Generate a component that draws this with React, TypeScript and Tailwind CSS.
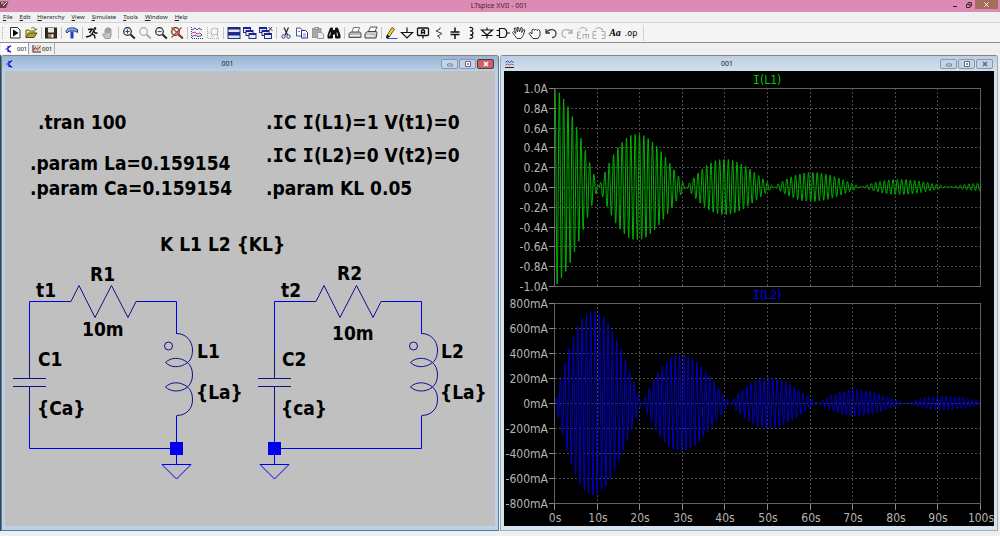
import type { ReactNode } from 'react';

const UI_FONT = "font-['Noto_Sans','Open_Sans',sans-serif]";

// ---------------------------------------------------------------- toolbar

function Icon({ children }: { children: ReactNode }) {
  return (
    <svg viewBox="0 0 16 16" className="h-4 w-4" fill="none" stroke="#111" strokeWidth="1">
      {children}
    </svg>
  );
}

type Tool = { label: string; art: ReactNode };

const magnifier = (stroke: string, inner: ReactNode) => (
  <>
    <circle cx="6.5" cy="6.5" r="3.8" stroke={stroke} strokeWidth="1.2" />
    <path d="M9.5 9.5l4.3 4" stroke={stroke} strokeWidth="2" />
    {inner}
  </>
);

const miniWindow = (x: number, y: number) => (
  <>
    <rect x={x} y={y} width="7" height="5" fill="#e8ecff" stroke="#24307f" />
    <path d={`M${x} ${y + 0.5}h7`} stroke="#1a2490" strokeWidth="2" />
  </>
);

const toolGroups: Tool[][] = [
  [
    {
      label: 'New Schematic',
      art: (
        <>
          <path d="M3.5 2.5h7l2.5 2.500v8h-9.500z" fill="#fff" stroke="#333" />
          <path d="M6 4.500v7l5.500-3.500z" fill="#000" stroke="none" />
        </>
      ),
    },
    {
      label: 'Open',
      art: (
        <>
          <path d="M3 12.500V5h3l1 1h4v2" fill="#e8e070" stroke="#66661a" />
          <path d="M3 12.500l2.500-4.500h8.500l-3 4.500z" fill="#a8a436" stroke="#4d4d10" />
          <path d="M8 3.500c2-1.500 4-1 4.500 1.500M11 4.500l1.500 1 1.500-2" stroke="#3c7a2a" />
        </>
      ),
    },
  ],
  [
    {
      label: 'Save',
      art: (
        <>
          <rect x="2.500" y="3" width="11" height="10" fill="#3a2a1c" stroke="#222" />
          <rect x="5" y="3" width="6" height="4.500" fill="#ece8e0" stroke="none" />
          <rect x="5" y="9" width="6" height="3.500" fill="#8d8478" stroke="none" />
          <rect x="8.500" y="9.500" width="1.500" height="3" fill="#fff" stroke="none" />
        </>
      ),
    },
  ],
  [
    {
      label: 'Control Panel',
      art: (
        <>
          <path d="M2 6.500C2.500 3.500 6 2.500 10 3l3.500 1.500v3L11 6H5L3 8z" fill="#8fb4dc" stroke="#1a3380" />
          <path d="M8 6.500v7" stroke="#1740c8" strokeWidth="3" />
        </>
      ),
    },
  ],
  [
    {
      label: 'Run',
      art: (
        <>
          <circle cx="11" cy="3.500" r="1.300" fill="#111" stroke="none" />
          <path d="M4 4.500l4-0.500 2 1.500L8 9l2.500 1.500 0.500 3M9.500 5.500l1.500 2.500h2.500M8 9l-2 2-4 1M7.500 5L5.500 8" strokeWidth="1.400" />
        </>
      ),
    },
    {
      label: 'Halt',
      art: (
        <path
          d="M5 13.500L2.500 9.500l1-0.800L5 10V4.500h1.500V8 3h1.500v5V3h1.500v5V4H11v6.500l-1 3z"
          fill="#c4c4c4"
          stroke="#999"
        />
      ),
    },
  ],
  [
    { label: 'Zoom In', art: magnifier('#222', <path d="M4.500 6.500h4M6.500 4.500v4" stroke="#2438a0" strokeWidth="1.200" />) },
    { label: 'Pan', art: magnifier('#a8a8a8', null) },
    { label: 'Zoom Out', art: magnifier('#222', <path d="M4.500 6.500h4" stroke="#1a7a7a" strokeWidth="1.200" />) },
    {
      label: 'Zoom Full Extents',
      art: magnifier('#4a2a1c', <path d="M2.500 2.500l11 10M12.500 2.500l-10 10" stroke="#b5402a" strokeWidth="1.200" />),
    },
  ],
  [
    {
      label: 'Autorange Y-axis',
      art: (
        <>
          <path d="M2.500 2v11.500H14" stroke="#444" strokeDasharray="1 1" />
          <path d="M3 5l3-2 2 2 2-2 3 2" stroke="#3450b8" />
          <path d="M3 8l3-1 2 2 3-1 2 2" stroke="#d0405c" />
          <path d="M3 11.500l3-1.500 3 1.500 4-1" stroke="#3450b8" />
        </>
      ),
    },
    {
      label: 'Plot Settings',
      art: (
        <>
          <path d="M2.500 2v11.500H14M2.500 8H6" stroke="#aaa" strokeDasharray="1 1" />
          <circle cx="9.500" cy="6.500" r="3.500" stroke="#bbb" />
          <path d="M7 12.500V9M12.500 3v9.500" stroke="#bbb" />
        </>
      ),
    },
  ],
  [
    {
      label: 'Tile Windows',
      art: (
        <>
          <rect x="2" y="2.500" width="12" height="5" fill="#dfe4f8" stroke="#24307f" />
          <rect x="2" y="8.500" width="12" height="5" fill="#dfe4f8" stroke="#24307f" />
          <path d="M2 3.500h12M2 9.500h12" stroke="#1a2490" strokeWidth="2" />
        </>
      ),
    },
    { label: 'Cascade Windows', art: <>{miniWindow(1.5, 2.5)}{miniWindow(4, 5.5)}{miniWindow(7, 8.5)}</> },
    {
      label: 'Close All',
      art: (
        <>
          {miniWindow(1.5, 2.5)}
          {miniWindow(4, 5.5)}
          {miniWindow(6.5, 8.5)}
          <path d="M10.500 2l4 4M14 2l-3.500 4" stroke="#333" />
        </>
      ),
    },
  ],
  [
    {
      label: 'Cut',
      art: (
        <>
          <path d="M6 2.500l3.500 7.500M10.500 2.500L7 10" stroke="#222" strokeWidth="1.200" />
          <circle cx="5.500" cy="11.500" r="1.700" stroke="#26358f" />
          <circle cx="10.500" cy="11.500" r="1.700" stroke="#26358f" />
        </>
      ),
    },
    {
      label: 'Copy',
      art: (
        <>
          <path d="M2.500 3h4l2 2v6h-6z" fill="#fff" stroke="#4a5590" />
          <path d="M7.500 5.500h4l2 2v5.500h-6z" fill="#fff" stroke="#26358f" />
          <path d="M4 6.500h2M9 9h3M9 11h3" stroke="#7780b0" />
        </>
      ),
    },
    {
      label: 'Paste',
      art: (
        <>
          <rect x="2.500" y="3.500" width="8.500" height="9" fill="#aaa" stroke="#999" />
          <rect x="5" y="2.500" width="3.500" height="2" fill="#ddd" stroke="#888" />
          <path d="M7.500 7.500h4l2 2v4h-6z" fill="#eee" stroke="#999" />
        </>
      ),
    },
    {
      label: 'Find',
      art: (
        <>
          <path
            d="M4.500 3h2v2.500h3V3h2l2.500 7v3H9.500V9h-3v4H2v-3z"
            fill="#111"
            stroke="#111"
            strokeLinejoin="round"
          />
          <path d="M4.500 7.500L3.500 11M11 7.500l0.500 3.500" stroke="#ddd" />
        </>
      ),
    },
  ],
  [
    {
      label: 'Print',
      art: (
        <>
          <path d="M5 7l1.500-4.500h6L11 7" fill="#fff" stroke="#777" />
          <path d="M2 8.500L4 7h9l1 1.500v4H2z" fill="#b8b8b8" stroke="#555" />
          <path d="M3 10.500h10" stroke="#eee" />
        </>
      ),
    },
    {
      label: 'Print Setup',
      art: (
        <>
          <path d="M5.500 6.500l2-4.500H14l-2 4.500" fill="#fff" stroke="#555" />
          <path d="M2 8.500L4.500 6.500h9l0.500 2-1 4.500H2z" fill="#c8c8c8" stroke="#444" />
          <path d="M3 11h8" stroke="#fff" />
          <path d="M8 9.500h3" stroke="#c8b428" />
        </>
      ),
    },
  ],
  [
    {
      label: 'Wire',
      art: (
        <>
          <path d="M4 10.500L9 2.500l2.500 1.500-5 7.500z" fill="#f0dc3c" stroke="#665510" />
          <path d="M4 10.500l-0.500 2.500 3-1.500z" fill="#111" stroke="#111" />
          <path d="M4 13.500h10.500" stroke="#3a48e0" />
        </>
      ),
    },
    { label: 'Ground', art: <path d="M8 2.500v4.500M2.500 7.500h11L8 13z" strokeWidth="1.200" /> },
    {
      label: 'Label Net',
      art: (
        <>
          <rect x="2.500" y="3" width="11" height="7.500" rx="1" strokeWidth="1.300" />
          <path d="M6.500 9V5.500q1.500-1.500 3 0V9M6.500 7.500h3M8 10.500v3" strokeWidth="1.300" />
        </>
      ),
    },
    { label: 'Resistor', art: <path d="M9 2.500v1.500L5 6l6 2.500-4.500 2.500L8.500 12v1.500" stroke="#444" strokeWidth="1" /> },
    { label: 'Capacitor', art: <path d="M8 2.500V7M8 9.500V14M3.500 7h9M3.500 9.500h9" strokeWidth="1.500" /> },
    { label: 'Inductor', art: <path d="M6.500 2.500c4-0.500 4.500 3.500 0.500 3.500 4 0 4 4 0 4 4 0 3.500 4-0.500 3.500" strokeWidth="1.200" /> },
    { label: 'Diode', art: <path d="M2.500 5h11L8 10zM8 2.500V5M2.500 10.500h11M8 10v3.500" strokeWidth="1.200" /> },
    { label: 'Component', art: <path d="M4.500 3.500h3.500c5 0 5 9 0 9H4.500zM1.500 5.500h3M1.500 10.500h3M12 8h3" strokeWidth="1.200" /> },
    {
      label: 'Move',
      art: (
        <path
          d="M6 13.500L1.500 7.500l1-1L5 8.500 3 3.500l1.300-0.700L6.500 7 6 2.500h1.500L8.500 7l1.500-4.500 1.300 0.500-0.500 4.500 2-3 1.200 0.700-2 5.300L10 13.500z"
          fill="#fff"
          stroke="#333"
        />
      ),
    },
    {
      label: 'Drag',
      art: (
        <path
          d="M6 13.500L2 8.500l1-1.200L5 9V5l1.500-1L7.500 5.500 8.500 4 10 5.500 11.500 4.500 13 6v4l-2 3.500z"
          fill="#fff"
          stroke="#333"
        />
      ),
    },
    { label: 'Undo', art: <path d="M3 4v4h4M3.500 7.500C6 3 13 4 13 8.500c0 2.500-2 4-4 4" stroke="#4a3a30" strokeWidth="1.300" /> },
    { label: 'Redo', art: <path d="M13 4v4H9M12.500 7.500C10 3 3 4 3 8.500c0 2.500 2 4 4 4" stroke="#b0b0b0" strokeWidth="1.300" /> },
    {
      label: 'Rotate',
      art: <path d="M6 7H2.500v6.500H6M2.500 10H5M8 13.500V9.500h5.500v4M11 9.500v4M4 4.500c2-2.500 6-2.500 8 0V6M12 6l-2-1" stroke="#aaa" />,
    },
    {
      label: 'Mirror',
      art: <path d="M5.500 6.500H2v7h3.500M2 10h3M10.500 6.500H14v7h-3.500M14 10h-3M4 4.500c2-2.500 6-2.500 8 0M12 5l-2-1" stroke="#aaa" />,
    },
  ],
];

const textTools = [
  { label: 'Text', text: 'Aa', style: "font-['Liberation_Serif',serif] text-[10px] font-bold italic" },
  {
    label: 'SPICE Directive',
    text: '.op',
    style: "font-['DejaVu_Sans_Condensed','DejaVu_Sans',sans-serif] text-[9px]",
  },
];

function Toolbar() {
  return (
    <div className="flex h-5 items-center border-b border-[#8e8e8e] bg-[#f5f5f5] pl-[2px]">
      <div className="mr-[4px] h-3 border-l border-dotted border-[#b0b0b0]" />
      {toolGroups.map((group, i) => (
        <div key={i} className="group flex items-center">
          {i > 0 && (
            <div className="flex h-3 w-[5px] justify-center group-even:w-[5px] group-odd:w-[4px]">
              <span className="w-px bg-[#c4c4c4]" />
            </div>
          )}
          {group.map((tool) => (
            <button key={tool.label} type="button" aria-label={tool.label} className="h-4 w-4">
              <Icon>{tool.art}</Icon>
            </button>
          ))}
        </div>
      ))}
      {textTools.map((tool) => (
        <button
          key={tool.label}
          type="button"
          aria-label={tool.label}
          className={`w-4 text-center leading-4 text-black ${tool.style}`}
        >
          {tool.text}
        </button>
      ))}
      <span className="ml-1 h-4 w-px bg-[#d4d4d4]" />
    </div>
  );
}

// ---------------------------------------------------------------- drawing text

const DRAWING_FONT = "font-['DejaVu_Sans_Condensed','DejaVu_Sans',sans-serif]";

// Capital I gets its slab form from the mono face so it can't be read as l or 1.
function Spelled({ text }: { text: string }) {
  return text.split(/(I)/).map((part, i) =>
    part === 'I' ? (
      <tspan key={i} className="font-['DejaVu_Sans_Mono',monospace]">
        I
      </tspan>
    ) : (
      part
    ),
  );
}

// ---------------------------------------------------------------- schematic

const schematicText: [number, number, string][] = [
  [33, 58, '.tran 100'],
  [25, 99, '.param La=0.159154'],
  [25, 124, '.param Ca=0.159154'],
  [261, 58, '.IC I(L1)=1 V(t1)=0'],
  [261, 91, '.IC I(L2)=0 V(t2)=0'],
  [261, 124, '.param KL 0.05'],
  [155, 180, 'K L1 L2 {KL}'],
  [85, 210, 'R1'],
  [77, 265, '10m'],
  [31, 226, 't1'],
  [33, 295, 'C1'],
  [32, 344, '{Ca}'],
  [192, 287, 'L1'],
  [191, 328, '{La}'],
  [332, 209, 'R2'],
  [327, 269, '10m'],
  [276, 226, 't2'],
  [277, 295, 'C2'],
  [276, 344, '{ca}'],
  [436, 287, 'L2'],
  [435, 328, '{La}'],
];

function TankCircuit({ x, groundX }: { x: number; groundX: number }) {
  return (
    <g transform={`translate(${x} 0)`} fill="none" strokeWidth="1">
      <g stroke="#0000f0">
        <path d="M24.500 279V230.500H58M138 230.500h33.500V263M171.500 345v32.500h-147V345" />
        <path d={`M${groundX} 377v16.500M${groundX - 14.5} 393.500h29l-14.500 14.500z`} />
        <rect x={groundX - 6.5} y="371" width="13" height="13" fill="#0000f0" stroke="none" />
      </g>
      <g stroke="#10108a">
        <path d="M58 230.500h8l8-16 16 32 16.500-32 16.500 32 8-16h7" />
        <path d="M24.500 279v28.500M8 307.500h33M8 315.500h33M24.500 315.500V345" />
        <circle cx="163.500" cy="275" r="4" />
        <path d="M171.500 262.500C181 262.500 187.500 270 187.500 279C187.500 286 185 290 182 292C175 297 166 297 160.500 291.500C166 286 175 286 182 291C185.500 294 187.500 298 187.500 304C187.500 310 185 314 182 316.500C175 321.500 166 321 160.500 316C166 310.500 175 310.500 182 315.500C186 319 187.500 323 187.500 329C187.500 338 181 344.500 171.500 344.500" />
      </g>
    </g>
  );
}

function Schematic() {
  return (
    <svg viewBox="0 0 490 455" className="block h-auto w-full bg-[#c0c0c0]">
      <TankCircuit x={0} groundX={171.5} />
      <TankCircuit x={245} groundX={24.5} />
      <g className={`text-[19px] font-bold ${DRAWING_FONT}`} fill="#000">
        {schematicText.map(([x, y, text]) => (
          <text key={`${x}-${y}`} x={x} y={y}>
            <Spelled text={text} />
          </text>
        ))}
      </g>
    </svg>
  );
}

// ---------------------------------------------------------------- waveforms

const PLOT_LEFT = 51;
const PLOT_RIGHT = 477;
const CARRIER = 0.983;
const BEAT = 0.02433;
const DECAY = 0.0314;

type Pane = {
  title: string;
  color: string;
  trace: string;
  top: number;
  bottom: number;
  peak: number;
  labels: string[];
  wave: (t: number) => number;
};

const turn = 2 * Math.PI;

const panes: Pane[] = [
  {
    title: 'I(L1)',
    color: '#00c800',
    trace: '#00b400',
    top: 17,
    bottom: 215,
    peak: 1,
    labels: ['1.0A', '0.8A', '0.6A', '0.4A', '0.2A', '0.0A', '-0.2A', '-0.4A', '-0.6A', '-0.8A', '-1.0A'],
    wave: (t) => Math.exp(-DECAY * t) * Math.cos(turn * BEAT * t) * Math.cos(turn * CARRIER * t),
  },
  {
    title: 'I(L2)',
    color: '#0000f0',
    trace: '#0000c8',
    top: 232,
    bottom: 432,
    peak: 0.8,
    labels: ['800mA', '600mA', '400mA', '200mA', '0mA', '-200mA', '-400mA', '-600mA', '-800mA'],
    wave: (t) => Math.exp(-DECAY * t) * Math.sin(turn * BEAT * t) * Math.sin(turn * CARRIER * t),
  },
];

const timeX = (t: number) => PLOT_LEFT + (t / 100) * (PLOT_RIGHT - PLOT_LEFT);

function tracePoints({ top, bottom, peak, wave }: Pane) {
  const mid = (top + bottom) / 2;
  const points: string[] = [];
  for (let i = 0; i <= 2000; i++) {
    const t = i / 20;
    points.push(`${timeX(t).toFixed(2)},${(mid - (wave(t) / peak) * (mid - top)).toFixed(2)}`);
  }
  return points.join(' ');
}

function PlotPane({ pane }: { pane: Pane }) {
  const { top, bottom, labels } = pane;
  const rowY = (i: number) => Math.round(top + (i * (bottom - top)) / (labels.length - 1)) + 0.5;
  return (
    <g>
      <g stroke="#4c4c48" strokeDasharray="2 2">
        {labels.slice(1, -1).map((label, i) => (
          <path key={label} d={`M${PLOT_LEFT} ${rowY(i + 1)}H${PLOT_RIGHT}`} />
        ))}
        {[10, 20, 30, 40, 50, 60, 70, 80, 90].map((t) => (
          <path key={t} d={`M${Math.round(timeX(t)) - 0.5} ${top}V${bottom}`} />
        ))}
      </g>
      <polyline points={tracePoints(pane)} fill="none" stroke={pane.trace} strokeWidth="1" strokeLinejoin="round" />
      <rect
        x={PLOT_LEFT - 0.5}
        y={top + 0.5}
        width={PLOT_RIGHT - PLOT_LEFT}
        height={bottom - top}
        fill="none"
        stroke="#62625e"
      />
      <g fill="#b4b4b4" textAnchor="end">
        {labels.map((label, i) => (
          <g key={label}>
            <path d={`M45 ${rowY(i)}h5`} stroke="#8a8a8a" />
            <text x="44" y={rowY(i) + 4.5}>
              {label}
            </text>
          </g>
        ))}
      </g>
      <text x="263" y={top - 4} fill={pane.color} textAnchor="middle">
        <Spelled text={pane.title} />
      </text>
    </g>
  );
}

function Waveforms() {
  return (
    <svg viewBox="0 0 490 455" className={`block h-auto w-full bg-black text-[12px] ${DRAWING_FONT}`}>
      {panes.map((pane) => (
        <PlotPane key={pane.title} pane={pane} />
      ))}
      <g fill="#b4b4b4" textAnchor="middle">
        {[0, 10, 20, 30, 40, 50, 60, 70, 80, 90, 100].map((t) => (
          <g key={t}>
            <path d={`M${Math.round(timeX(t)) - 0.5} 433v6`} stroke="#8a8a8a" />
            <text x={Math.round(timeX(t))} y="451">
              {t}s
            </text>
          </g>
        ))}
      </g>
    </svg>
  );
}

// ---------------------------------------------------------------- windows

const SchematicGlyph = () => (
  <svg viewBox="0 0 8 8" className="h-2 w-2" fill="none" stroke="#1010e8" strokeWidth="1.200">
    <path d="M0.500 4H3M3 1v6M3 3l3-2.500M3 5l3 2.500" />
  </svg>
);

const PlotGlyph = () => (
  <svg viewBox="0 0 9 8" className="h-2 w-[9px]" fill="none" strokeWidth="1">
    <path d="M0.500 2.500L2.500 1l2 1.500 2-1.500 2 1.500" stroke="#2a3cc8" />
    <path d="M0.500 5l2-1 2 1 2-1 2 1" stroke="#c84a4a" />
    <path d="M0 7.500h9" stroke="#222" />
  </svg>
);

const PlotTabGlyph = () => (
  <svg viewBox="0 0 9 8" className="h-2 w-[9px]" fill="none" strokeWidth="1">
    <rect width="9" height="8" fill="#d8c8c4" />
    <path d="M1 0v7h8" stroke="#444" />
    <path d="M1.500 5l2-2.500L5 4.500l3.500-3" stroke="#b02020" />
  </svg>
);

const controls = [
  { label: 'Minimize', art: <rect x="3.500" y="4" width="5" height="2" rx="0.500" /> },
  { label: 'Maximize', art: <path d="M3.500 1.500h5v5h-5zM5.500 3.500h1v1h-1z" /> },
  { label: 'Close', art: <path d="M4 2l4 4M8 2L4 6" strokeWidth="1.500" /> },
];

function ChildWindow({ active, icon, children }: { active: boolean; icon: ReactNode; children: ReactNode }) {
  const frame = active ? 'border-[#4f7f9a] bg-[#bcd0ea]' : 'border-[#a4abb2] bg-[#d5e2f0]';
  const bar = active ? 'bg-linear-to-b from-[#98b4d2] to-[#b9d1ea]' : 'bg-linear-to-b from-[#bccfe2] to-[#d3e0ee]';
  return (
    <section className={`min-w-0 flex-1 rounded-t-[3px] border border-t-[#868686] px-[3px] pb-[4px] ${frame}`}>
      <header className={`-mx-[3px] flex h-[15px] items-center rounded-t-[2px] px-[4px] ${bar}`}>
        {icon}
        <h2 className="flex-1 text-center text-[7px] leading-3 text-[#222]">001</h2>
        <div className="flex gap-px">
          {controls.map((control) => {
            const hot = active && control.label === 'Close';
            return (
              <button
                key={control.label}
                type="button"
                aria-label={control.label}
                className={`flex h-[10px] w-[17px] items-center justify-center rounded-[2px] border ${
                  hot ? 'border-[#6b3030] bg-[#c4636a]' : 'border-[#8799ae] bg-[#c3d4e6]'
                }`}
              >
                <svg
                  viewBox="0 0 12 8"
                  className="h-2 w-3"
                  fill={hot ? 'none' : '#fff'}
                  stroke={hot ? '#fff' : '#667'}
                >
                  {control.art}
                </svg>
              </button>
            );
          })}
        </div>
      </header>
      {children}
    </section>
  );
}

// ---------------------------------------------------------------- shell

const menus = ['File', 'Edit', 'Hierarchy', 'View', 'Simulate', 'Tools', 'Window', 'Help'];

function TitleBar() {
  return (
    <header className="flex h-3 items-start bg-[#dc8cb4]">
      <div className="flex flex-1">
        <svg viewBox="0 0 10 10" className="h-[10px] w-[10px]">
          <path d="M0 1.500h8.500L6 8H0z" fill="#6b3a44" />
          <path d="M1 3h3M3 6l4-4" stroke="#f0e0d8" strokeWidth="1" />
        </svg>
      </div>
      <h1 className="text-[7px] leading-[11px] text-[#4a2030]">LTspice XVII - 001</h1>
      <div className="flex flex-1 justify-end pr-[2px]">
        <button type="button" aria-label="Minimize" className="flex h-[9px] w-[14px] items-center justify-center">
          <span className="mt-[3px] h-px w-1 bg-[#222]" />
        </button>
        <button type="button" aria-label="Restore" className="flex h-[9px] w-[13px] items-center justify-center">
          <svg viewBox="0 0 6 6" className="h-[6px] w-[6px]" fill="none" stroke="#3a2a2a">
            <path d="M0.500 2.500h3.500v3h-3.500zM2 2V0.500h3.500v3.500H4" />
          </svg>
        </button>
        <button type="button" aria-label="Close" className="flex h-[9px] w-[23px] items-center justify-center bg-[#a66c5c]">
          <svg viewBox="0 0 5 5" className="h-[5px] w-[5px]" stroke="#fff">
            <path d="M0.500 0.500l4 4M4.500 0.500l-4 4" />
          </svg>
        </button>
      </div>
    </header>
  );
}

export default function App() {
  return (
    <div className={`min-h-screen bg-[#efefef] ${UI_FONT}`}>
      <TitleBar />
      <nav className="flex h-[11px] items-center gap-[7px] border-b border-[#d3d7dc] bg-[#f0f0f0] pl-[3px]">
        {menus.map((menu) => (
          <button key={menu} type="button" className="text-[6px] leading-[9px] text-[#1a1a1a]">
            <span className="underline underline-offset-1">{menu[0]}</span>
            {menu.slice(1)}
          </button>
        ))}
      </nav>
      <Toolbar />
      <div role="tablist" className="flex h-3 items-start pl-px text-[6px] leading-[10px] text-black">
        <button
          type="button"
          role="tab"
          aria-selected
          className="flex h-[11px] w-7 items-center gap-1 border-r border-[#9a9a9a] bg-white pl-1"
        >
          <SchematicGlyph />
          001
        </button>
        <button
          type="button"
          role="tab"
          aria-selected={false}
          className="flex h-[11px] w-[26px] items-center gap-px border-r border-[#b0b0b0] pl-[3px]"
        >
          <PlotTabGlyph />
          001
        </button>
      </div>
      <main className="flex gap-px border-l border-[#444] pr-[2px]">
        <ChildWindow active icon={<SchematicGlyph />}>
          <Schematic />
        </ChildWindow>
        <ChildWindow active={false} icon={<PlotGlyph />}>
          <Waveforms />
        </ChildWindow>
      </main>
    </div>
  );
}
